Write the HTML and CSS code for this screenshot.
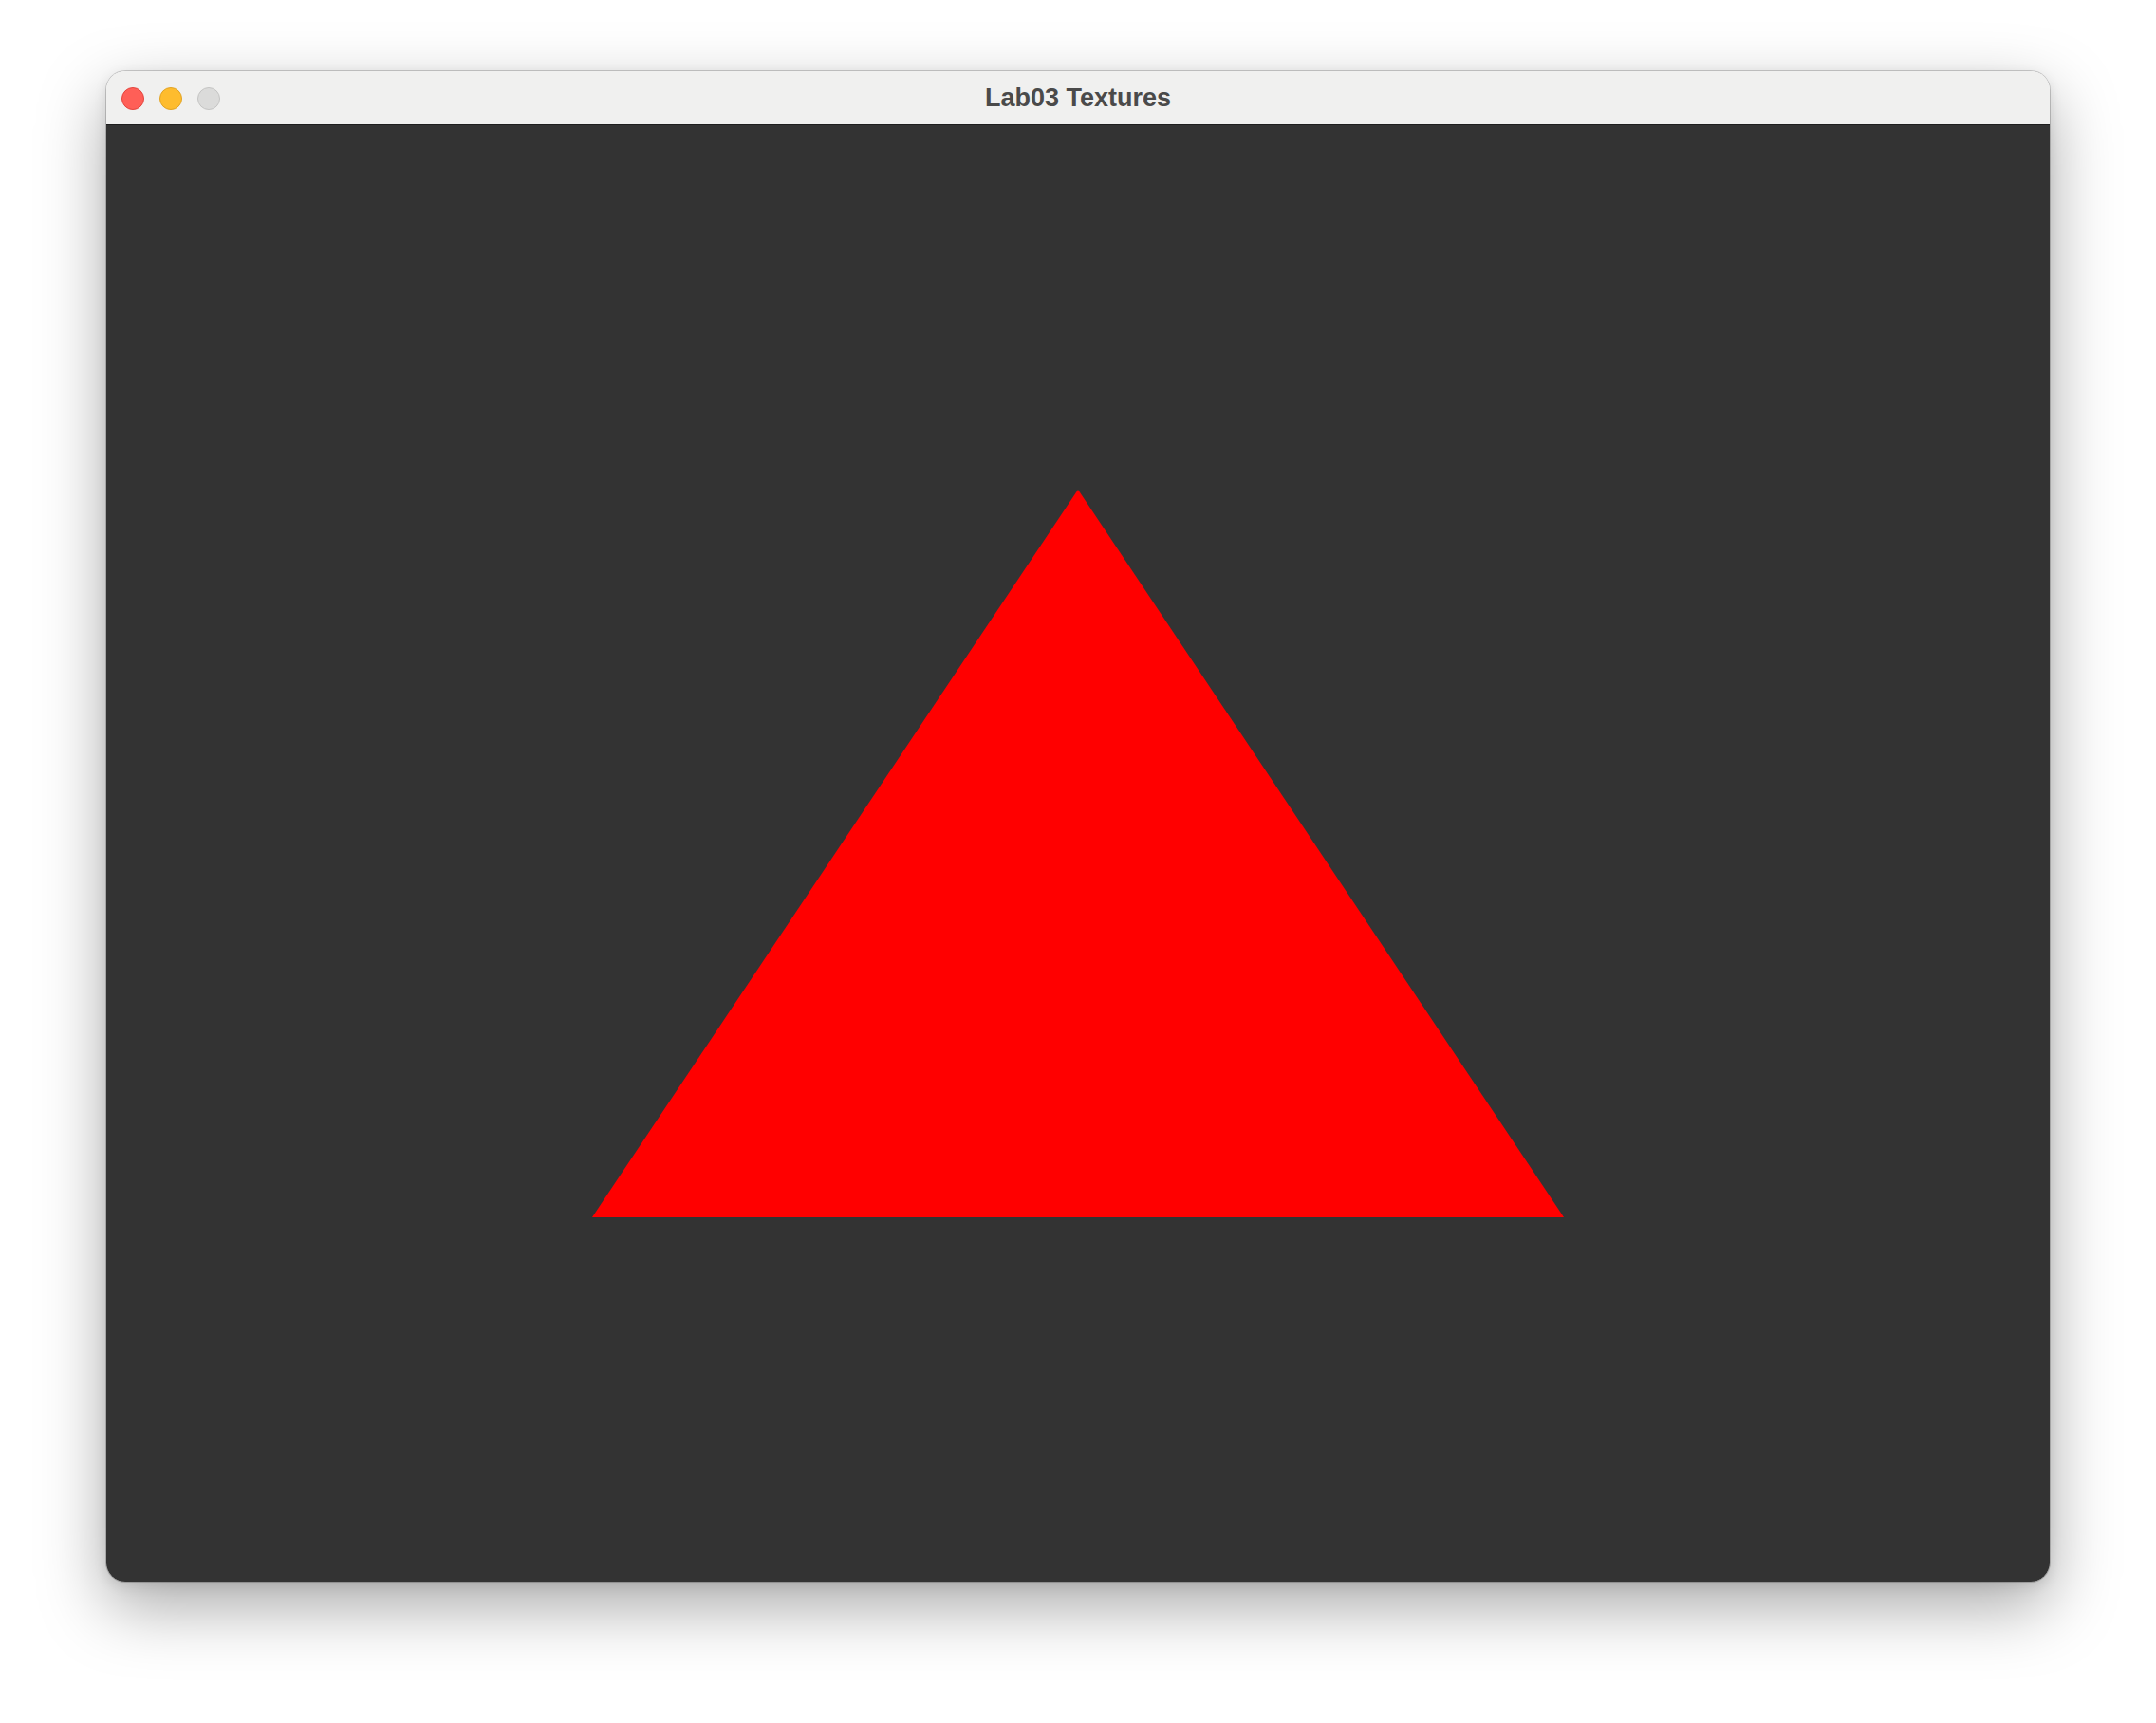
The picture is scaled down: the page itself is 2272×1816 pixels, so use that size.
FILE: index.html
```html
<!DOCTYPE html>
<html>
<head>
<meta charset="utf-8">
<title>Lab03 Textures</title>
<link rel="stylesheet" href="styles.css">
</head>
<body>
<div class="desktop">
  <div class="window">
    <div class="titlebar">
      <div class="lights">
        <span class="light close"></span>
        <span class="light minimize"></span>
        <span class="light zoom"></span>
      </div>
      <div class="title">Lab03 Textures</div>
      <div class="spacer"></div>
    </div>
    <div class="content">
      <svg class="canvas" viewBox="0 0 2048 1535" preserveAspectRatio="none" xmlns="http://www.w3.org/2000/svg">
        <polygon points="512,1151 1536,1151 1024,384" fill="#ff0000"/>
      </svg>
    </div>
  </div>
</div>
</body>
</html>
```
FILE: styles.css
```css
html, body {
  margin: 0;
  padding: 0;
  background: #ffffff;
}
.desktop {
  width: 2272px;
  height: 1816px;
  box-sizing: border-box;
  padding: 75px 0 0 112px;
  display: flex;
  align-items: flex-start;
  background: #ffffff;
}
.window {
  width: 2048px;
  height: 1592px;
  display: flex;
  flex-direction: column;
  border-radius: 20px;
  overflow: hidden;
  box-shadow: 0 0 0 1px rgba(0, 0, 0, 0.18), 0 26px 70px rgba(0, 0, 0, 0.34), 0 4px 14px rgba(0, 0, 0, 0.10);
}
.titlebar {
  height: 56px;
  flex: 0 0 56px;
  background: #f0f0ef;
  border-bottom: 1px solid #1e1e1e;
  display: grid;
  grid-template-columns: 1fr auto 1fr;
  align-items: center;
  font-family: "Liberation Sans", Arial, sans-serif;
}
.lights {
  display: flex;
  gap: 16px;
  padding-left: 16px;
  padding-top: 1px;
}
.light {
  width: 22px;
  height: 22px;
  border-radius: 50%;
  display: block;
}
.close {
  background: #ff5f57;
  border: 1px solid #e2463f;
}
.minimize {
  background: #febc2e;
  border: 1px solid #e1a325;
}
.zoom {
  background: #dbdbda;
  border: 1px solid #c4c4c3;
}
.title {
  font-size: 27px;
  font-weight: bold;
  color: #4a4a4a;
  letter-spacing: 0;
  padding-top: 1px;
}
.content {
  flex: 1;
  background: #333333;
  display: flex;
}
.canvas {
  width: 2048px;
  height: 1535px;
  display: block;
}
```
